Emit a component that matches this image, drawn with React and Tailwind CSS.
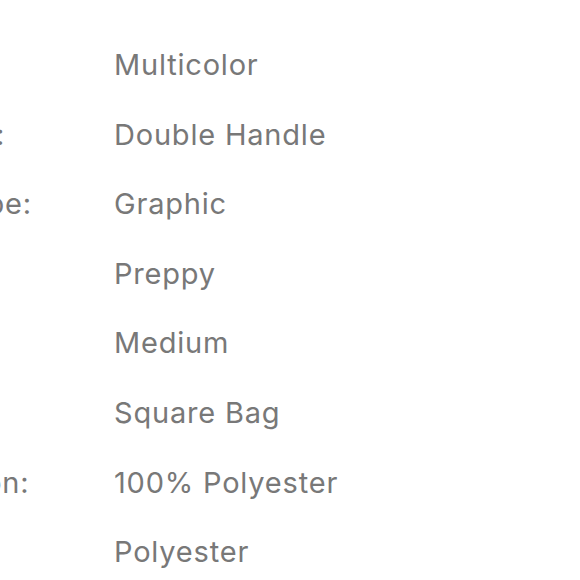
import React from "react";

const rows = [
  ["Color:", "Multicolor"],
  ["Strap Type:", "Double Handle"],
  ["Pattern Type:", "Graphic"],
  ["Style:", "Preppy"],
  ["Bag Size:", "Medium"],
  ["Type:", "Square Bag"],
  ["Composition:", "100% Polyester"],
  ["Material:", "Polyester"],
];

export default function App() {
  return (
    <div className="w-[580px] h-[580px] overflow-hidden bg-white" style={{ fontFamily: "Inter, 'Noto Sans', sans-serif" }}>
      <div className="ml-[-161px] pt-[30px] flex flex-col">
        {rows.map(([k, v]) => (
          <div key={v} className="flex items-center h-[69.6px] text-[29px] tracking-[0.8px] text-[#787878]">
            <div className="w-[275px] shrink-0 whitespace-nowrap">{k}</div>
            <div className="whitespace-nowrap">{v}</div>
          </div>
        ))}
      </div>
    </div>
  );
}
